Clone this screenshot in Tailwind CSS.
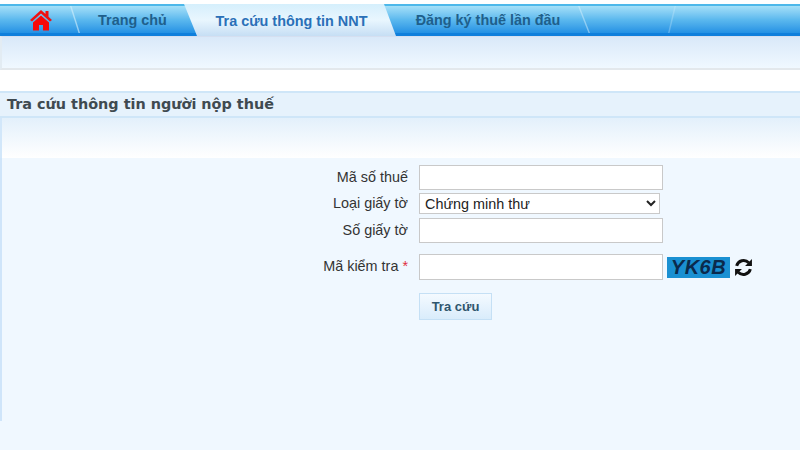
<!DOCTYPE html>
<html lang="vi">
<head>
  <meta charset="UTF-8">
  <meta name="viewport" content="width=device-width, initial-scale=1.0">
  <title>Tra cứu thông tin người nộp thuế</title>
  <script src="https://cdn.jsdelivr.net/npm/@tailwindcss/browser@4"></script>
</head>
<body class="w-[800px] h-[450px] overflow-hidden bg-white font-['Liberation_Sans',Arial,sans-serif] flex flex-col">
  <!-- tab bar -->
  <nav class="mt-[4px] h-[32px] flex shrink-0 border-t-2 border-[#4db8ea] border-b-[3px] border-b-[#0f7fdc] bg-gradient-to-b from-[#a5e0f8] via-[#5cb9ee] to-[#2291e4] font-bold text-[14.4px] text-[#1f5f8b] relative">
    <span class="absolute left-[70px] top-0 bottom-0 w-[10px] bg-[#d5f0fc]/60 [clip-path:polygon(0_0,1.5px_0,10px_100%,8.5px_100%)]"></span>
    <span class="absolute left-[578px] top-0 bottom-0 w-[12px] bg-[#d5f0fc]/50 [clip-path:polygon(0_0,1.5px_0,12px_100%,10.5px_100%)]"></span>
    <span class="absolute left-[668px] top-0 bottom-0 w-[8px] bg-[#d5f0fc]/30 [clip-path:polygon(6.5px_0,8px_0,1.5px_100%,0_100%)]"></span>
    <a class="w-[68px] flex items-center justify-center pl-[13px] pt-[1px]">
      <svg width="24" height="22" viewBox="0 0 24 22"><path d="M12 1 L1 11 L3 12.500 L12 4.500 L21 12.500 L23 11 L19.500 7.800 V2 H16.500 V5 Z" fill="#f01010"/><path d="M12 6.500 L4 13.500 V21.500 H10 V16 H14 V21.500 H20 V13.500 Z" fill="#f80808"/></svg>
    </a>
    <a class="w-[129px] flex items-center justify-center pt-[3px]">Trang chủ</a>
    <a class="-ml-[13px] -mb-[3px] -mt-[2px] w-[212px] flex items-center justify-center pl-[3px] pt-[3px] text-[#2a70b8] bg-gradient-to-b from-[#d5effc] via-[#e9f6fe] to-[#c6def4] [clip-path:polygon(0_0,200px_0,212px_100%,13px_100%)]">Tra cứu thông tin NNT</a>
    <a class="w-[186px] -ml-[1px] flex items-center justify-center pt-[3px]">Đăng ký thuế lần đầu</a>
  </nav>

  <!-- sub menu band -->
  <div class="h-[34px] shrink-0 border-t border-[#d5dff0] border-l-2 border-l-[#e3ecf3] border-b-2 border-b-[#e3e8ec] bg-gradient-to-b from-[#d9e9f9] to-[#f0f8ff]"></div>

  <!-- panel -->
  <section class="mt-[21px] flex-1 flex flex-col bg-[#f0f8ff]">
    <h2 class="h-[27px] shrink-0 pl-[7px] flex items-center border-y-2 border-[#cfe6f8] bg-[#e6f2fc] font-['DejaVu_Sans',Verdana,sans-serif] font-bold text-[14.400px] text-[#3f4a50]">Tra cứu thông tin người nộp thuế</h2>
    <div class="h-[40px] shrink-0 border-l-2 border-[#d2e7fa] bg-gradient-to-b from-[#e3f0fb] to-white"></div>
    <form class="h-[263px] shrink-0 border-l-2 border-[#cfe5fa] pt-[7px] flex flex-col text-[14.4px] text-[#333]">
      <div class="flex items-center h-[25px]">
        <label class="w-[406px] text-right">Mã số thuế</label>
        <input class="ml-[11px] w-[244px] h-[25px] bg-white border border-[#c9c9c9]" type="text">
      </div>
      <div class="flex items-center h-[21px] mt-[3px]">
        <label class="w-[406px] text-right">Loại giấy tờ</label>
        <select class="ml-[11px] w-[241px] h-[21px] pl-[1px] bg-white border border-[#c9c9c9] text-[14.4px] text-[#222]">
          <option>Chứng minh thư</option>
        </select>
      </div>
      <div class="flex items-center h-[25px] mt-[4px]">
        <label class="w-[406px] text-right">Số giấy tờ</label>
        <input class="ml-[11px] w-[244px] h-[25px] bg-white border border-[#c9c9c9]" type="text">
      </div>
      <div class="flex items-center h-[26px] mt-[11px]">
        <label class="w-[406px] text-right">Mã kiểm tra <span class="text-[#e03040]">*</span></label>
        <input class="ml-[11px] w-[244px] h-[26px] bg-white border border-[#c9c9c9]" type="text">
        <span class="ml-[4px] w-[63px] h-[21px] bg-[#1a90d2] text-[#0b2a4c] italic font-bold text-[20px] leading-[21px] tracking-[0.5px] text-center">YK6B</span>
        <svg class="ml-[4px]" width="19" height="19" viewBox="0 0 18 18" fill="none" stroke="#111" stroke-width="2.800">
          <path d="M2.500 7.500 A6.800 6.800 0 0 1 14 4.500" />
          <path d="M15.500 10.500 A6.800 6.800 0 0 1 4 13.500" />
          <path d="M17 1 V7.500 H10.500 Z" fill="#111" stroke="none"/>
          <path d="M1 17 V10.500 H7.500 Z" fill="#111" stroke="none"/>
        </svg>
      </div>
      <div class="pl-[417px] mt-[13px]">
        <button type="button" class="w-[73px] h-[27px] border border-[#c5e0f5] bg-gradient-to-b from-[#f4faff] to-[#d9ecfb] font-bold text-[13px] text-[#2f566e]">Tra cứu</button>
      </div>
    </form>
  </section>
</body>
</html>
